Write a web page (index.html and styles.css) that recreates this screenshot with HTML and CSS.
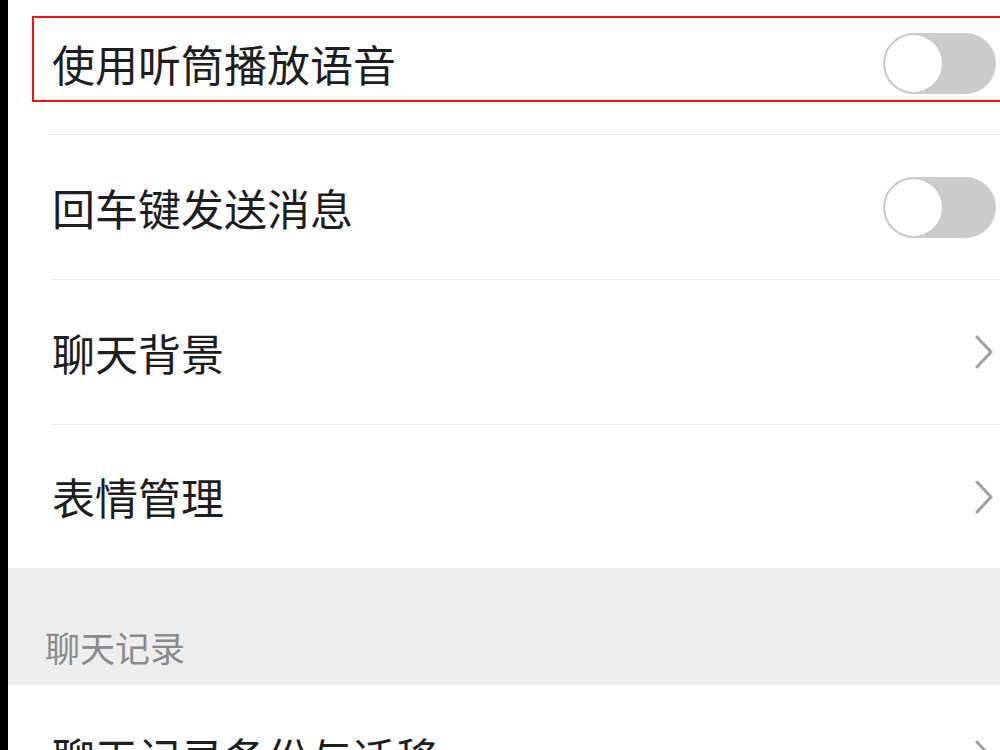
FILE: index.html
```html
<!DOCTYPE html>
<html lang="zh-CN">
<head>
    <meta charset="UTF-8">
    <meta name="viewport" content="width=device-width, initial-scale=1.0">
    <title>聊天设置</title>
    <link rel="stylesheet" href="styles.css">
</head>
<body>
    <div class="screen">
        <div class="item item-first">
            <div class="highlight">
                <span class="label">使用听筒播放语音</span>
                <span class="switch"><span class="knob"></span></span>
            </div>
        </div>
        <div class="item">
            <div class="item-body">
                <span class="label">回车键发送消息</span>
                <span class="switch"><span class="knob"></span></span>
            </div>
        </div>
        <div class="item">
            <div class="item-body">
                <span class="label">聊天背景</span>
                <svg class="chevron" width="20" height="34" viewBox="0 0 20 34"><polyline points="3,2 17,17 3,32" /></svg>
            </div>
        </div>
        <div class="item">
            <div class="item-body no-line">
                <span class="label">表情管理</span>
                <svg class="chevron" width="20" height="34" viewBox="0 0 20 34"><polyline points="3,2 17,17 3,32" /></svg>
            </div>
        </div>
        <div class="section-title">聊天记录</div>
        <div class="item">
            <div class="item-body no-line">
                <span class="label">聊天记录备份与迁移</span>
                <svg class="chevron" width="20" height="34" viewBox="0 0 20 34"><polyline points="3,2 17,17 3,32" /></svg>
            </div>
        </div>
    </div>
</body>
</html>
```

FILE: styles.css
```css
html, body {
    margin: 0;
    padding: 0;
    height: 100%;
    overflow: hidden;
}
body {
    background-color: #000;
    font-family: "Noto Sans CJK SC", "Noto Sans", sans-serif;
}
.screen {
    margin-left: 8px;
    background: #fff;
    min-height: 100%;
    overflow: hidden;
}
.item {
    padding-left: 44px;
}
.item-body {
    display: flex;
    align-items: center;
    justify-content: space-between;
    height: 144px;
    padding-right: 4px;
    border-bottom: 1px solid #ececec;
}
.item-body.no-line {
    border-bottom: none;
    height: 143px;
}
.item-first {
    padding: 16px 0 32px 0;
    border-bottom: 1px solid #ececec;
    margin-left: 39px;
}
.highlight {
    display: flex;
    align-items: center;
    justify-content: space-between;
    box-sizing: border-box;
    height: 86px;
    margin-left: -15px;
    margin-right: -20px;
    padding: 8px 22px 0 18px;
    border: 2px solid #f50f0f;
}
.label {
    font-size: 43px;
    line-height: 1;
    color: #1e1e1e;
}
.switch {
    display: flex;
    align-items: center;
    box-sizing: border-box;
    width: 113px;
    height: 61px;
    padding: 2px;
    border-radius: 31px;
    background: #cbcbcb;
}
.knob {
    width: 57px;
    height: 57px;
    border-radius: 50%;
    background: #fff;
    box-shadow: 0 0 1px rgba(0, 0, 0, 0.15);
}
.chevron {
    margin-right: 2px;
}
.chevron polyline {
    fill: none;
    stroke: #a0a0a0;
    stroke-width: 3;
    stroke-linecap: round;
    stroke-linejoin: round;
}
.section-title {
    display: flex;
    align-items: flex-end;
    box-sizing: border-box;
    height: 117px;
    padding: 0 0 21px 37px;
    background: #ededed;
    color: #8a8a8a;
    font-size: 35px;
    line-height: 1;
}
```
